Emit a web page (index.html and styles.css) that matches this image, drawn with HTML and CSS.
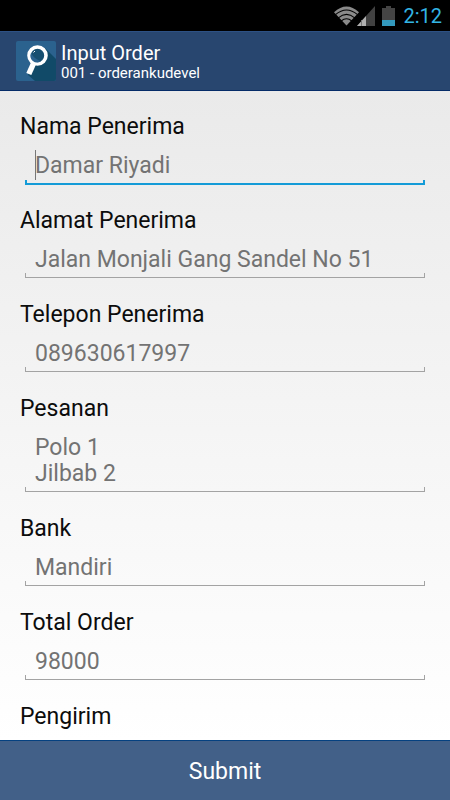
FILE: index.html
```html
<!DOCTYPE html>
<html lang="id">
<head>
<meta charset="utf-8">
<meta name="viewport" content="width=device-width, initial-scale=1">
<title>Input Order</title>
<link rel="stylesheet" href="styles.css">
</head>
<body>
<div class="status">
  <svg class="wifi" width="25" height="20" viewBox="0 0 26 20" aria-hidden="true">
    <path d="M0 6.200Q13-5.800 26 6.200L13 20Z" fill="#8a8a8a"/>
    <path d="M1.500 8.600Q13-1.200 24.500 8.600M4.500 12Q13 4.600 21.500 12M7.500 15.200Q13 10.400 18.500 15.200" fill="none" stroke="#000" stroke-width="1.100"/>
  </svg>
  <svg class="signal" width="18" height="20" viewBox="0 0 18 20" aria-hidden="true">
    <path d="M0 20L18 0V20Z" fill="#414141"/>
    <path d="M0 20L9 10V20Z" fill="#b0b0b0"/>
    <path d="M4.500 14V20" stroke="#777" stroke-width="1"/>
  </svg>
  <svg class="battery" width="13" height="20" viewBox="0 0 13 20" aria-hidden="true">
    <path d="M4 0H9V2H13V20H0V2H4Z" fill="#444"/>
    <path d="M0 14H13V20H0Z" fill="#3399bd"/>
  </svg>
  <span class="clock">2:12</span>
</div>
<header class="bar">
  <svg class="logo" width="40" height="40" viewBox="0 0 40 40" aria-hidden="true">
    <rect width="40" height="40" rx="2" fill="#2b628e"/>
    <path d="M29 7L40 18V38Q40 40 38 40H19L12 34L17 22Z" fill="#114a68"/>
    <circle cx="21.500" cy="14.500" r="8.500" fill="#174f70" stroke="#fff" stroke-width="3.600"/>
    <path d="M15 12A6.700 6.700 0 0 0 25 20.200Q18 18 15 12Z" fill="#2b628e"/>
    <path d="M17.500 11.500L19 10" stroke="#fff" stroke-width="1"/>
    <path d="M17.500 22.500L12.800 33" stroke="#fff" stroke-width="5.500"/>
  </svg>
  <div class="titles">
    <h1 class="title">Input Order</h1>
    <p class="subtitle">001 - orderankudevel</p>
  </div>
</header>
<form class="form" id="order">
  <div class="field">
    <label class="label" for="nama">Nama Penerima</label>
    <div class="control">
      <input class="input active" id="nama" type="text" placeholder="Damar Riyadi">
      <span class="caret"></span>
    </div>
  </div>
  <div class="field">
    <label class="label" for="alamat">Alamat Penerima</label>
    <input class="input" id="alamat" type="text" placeholder="Jalan Monjali Gang Sandel No 51">
  </div>
  <div class="field">
    <label class="label" for="telepon">Telepon Penerima</label>
    <input class="input" id="telepon" type="tel" placeholder="089630617997">
  </div>
  <div class="field">
    <label class="label" for="pesanan">Pesanan</label>
    <textarea class="input" id="pesanan" rows="2" placeholder="Polo 1&#10;Jilbab 2"></textarea>
  </div>
  <div class="field">
    <label class="label" for="bank">Bank</label>
    <input class="input" id="bank" type="text" placeholder="Mandiri">
  </div>
  <div class="field">
    <label class="label" for="total">Total Order</label>
    <input class="input" id="total" type="text" placeholder="98000">
  </div>
  <div class="field">
    <label class="label" for="pengirim">Pengirim</label>
    <input class="input" id="pengirim" type="text">
  </div>
</form>
<button class="submit" type="submit" form="order">Submit</button>
</body>
</html>
```
FILE: styles.css
```css
* {
  box-sizing: border-box;
}

body {
  margin: 0;
  height: 100vh;
  display: flex;
  flex-direction: column;
  font-family: Roboto, "Liberation Sans", sans-serif;
  font-size: 23px;
  line-height: 26px;
  color: #0c0c0c;
  background: #fff;
}

.status {
  flex: none;
  display: flex;
  align-items: center;
  justify-content: flex-end;
  height: 31px;
  padding-right: 8px;
  background: #000;
}

.wifi {
  margin-right: -2px;
}

.signal {
  margin-right: 7px;
}

.battery {
  margin-right: 8px;
}

.clock {
  color: #33b5e5;
  font-size: 20px;
}

.bar {
  flex: none;
  display: flex;
  align-items: center;
  gap: 5px;
  height: 60px;
  padding-left: 16px;
  color: #fff;
  background: #28466f;
  border-top: 1px solid #2d5184;
  border-bottom: 1px solid #052c68;
}

.title {
  margin: 0;
  font-size: 20px;
  font-weight: 400;
  line-height: 24px;
}

.subtitle {
  margin: 0;
  font-size: 15px;
  line-height: 17px;
}

.form {
  flex: 1;
  min-height: 0;
  overflow-y: auto;
  scrollbar-width: none;
  display: flex;
  flex-direction: column;
  gap: 22px;
  padding: 23px 20px;
  background: linear-gradient(#eaeaea, #fff);
}

.field {
  flex: none;
  display: flex;
  flex-direction: column;
  gap: 5px;
}

.control {
  position: relative;
  display: flex;
}

.input {
  --line: #a3a3a3;
  --weight: 1px;
  flex: none;
  display: block;
  width: calc(100% - 10px);
  margin: 0 5px;
  padding: 8px 10px 7px;
  border: 0;
  border-radius: 0;
  outline: 0;
  resize: none;
  overflow: hidden;
  font: inherit;
  color: #737373;
  background:
    linear-gradient(var(--line), var(--line)) left bottom 2px / 100% var(--weight) no-repeat,
    linear-gradient(var(--line), var(--line)) left bottom 2px / var(--weight) 5px no-repeat,
    linear-gradient(var(--line), var(--line)) right bottom 2px / var(--weight) 5px no-repeat;
}

.input.active {
  --line: #149bd7;
  --weight: 2px;
  background-position: left bottom 1px, left bottom 1px, right bottom 1px;
}

.input::placeholder {
  color: #737373;
  opacity: 1;
}

.caret {
  position: absolute;
  left: 15px;
  top: 5px;
  width: 1px;
  height: 30px;
  background: #777;
}

.submit {
  flex: none;
  height: 60px;
  padding: 2px 0 0;
  border: 0;
  border-top: 1px solid #054180;
  font: inherit;
  color: #fff;
  background: #426088;
}
```
